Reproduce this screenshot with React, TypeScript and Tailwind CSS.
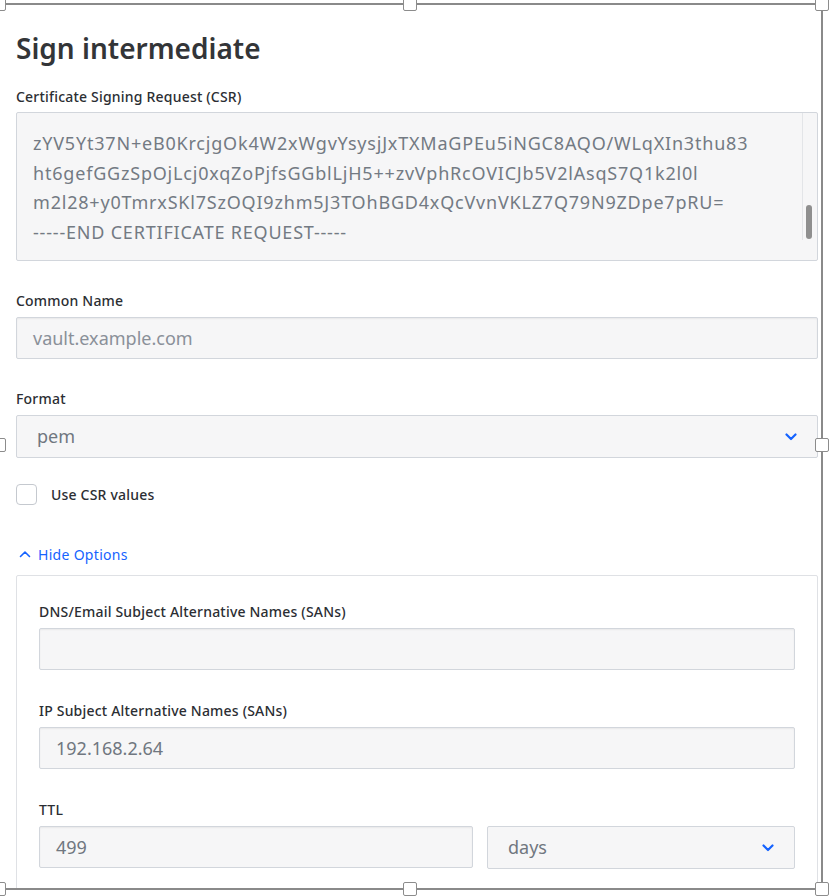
import React from "react";

const csrLines = [
  "zYV5Yt37N+eB0KrcjgOk4W2xWgvYsysjJxTXMaGPEu5iNGC8AQO/WLqXIn3thu83",
  "ht6gefGGzSpOjLcj0xqZoPjfsGGblLjH5++zvVphRcOVICJb5V2lAsqS7Q1k2l0l",
  "m2l28+y0TmrxSKl7SzOQI9zhm5J3TOhBGD4xQcVvnVKLZ7Q79N9ZDpe7pRU=",
  "-----END CERTIFICATE REQUEST-----",
];

function Chevron({ up = false, className = "" }: { up?: boolean; className?: string }) {
  return (
    <svg viewBox="0 0 12 8" className={className} fill="none">
      <path
        d={up ? "M1.5 6.5 6 2l4.5 4.5" : "M1.5 1.5 6 6l4.5-4.5"}
        stroke="currentColor"
        strokeWidth={up ? 1.6 : 2.2}
        strokeLinecap="round"
        strokeLinejoin="round"
      />
    </svg>
  );
}

function Label({ children, gap = "mb-[6px]" }: { children: React.ReactNode; gap?: string }) {
  return (
    <label className={`block h-5 leading-5 text-[14px] tracking-[0.2px] font-medium text-[#2b2e33] ${gap}`}>
      {children}
    </label>
  );
}

function Field({ value, placeholder }: { value?: string; placeholder?: string }) {
  return (
    <div className="h-[42px] flex items-center px-4 bg-[#f6f6f7] border border-[#d2d6dc] rounded-[2px] shadow-[inset_0_1px_2px_rgba(0,0,0,0.06)] text-[18px] text-[#707780]">
      {value ?? <span className="text-[#8a9099]">{placeholder}</span>}
    </div>
  );
}

function Select({ value }: { value: string }) {
  return (
    <div className="h-[43px] flex items-center justify-between pl-5 pr-5 bg-[#f6f6f7] border border-[#d2d6dc] rounded-[2px] text-[18px] text-[#707780]">
      <span>{value}</span>
      <Chevron className="w-3 h-2 text-[#1563ff]" />
    </div>
  );
}

function Handle({ pos }: { pos: string }) {
  return <div className={`absolute w-[14px] h-[14px] bg-white border border-[#8c8c8c] rounded-[2px] ${pos}`} />;
}

export default function App() {
  return (
    <div className="relative w-[834px] h-[896px] bg-white overflow-hidden" style={{ fontFamily: '"Noto Sans", "Open Sans", sans-serif' }}>
      <div className="h-[889px] overflow-hidden px-4 pt-[28px]">
        <h1 className="text-[28px] leading-10 font-semibold text-[#333538]">Sign intermediate</h1>

        <div className="mt-[19px]">
          <Label gap="mb-[5px]">Certificate Signing Request (CSR)</Label>
          <div className="relative h-[149px] bg-[#f6f6f7] border border-[#d2d6dc] rounded-[2px] overflow-hidden pl-4 pt-4 text-[18px] tracking-[0.8px] leading-[29.7px] text-[#737a83]">
            {csrLines.map((l) => (
              <div key={l} className="whitespace-nowrap">{l}</div>
            ))}
            <div className="absolute right-0 top-0 bottom-[20px] w-[15px] border-l border-[#e3e5e8]" />
            <div className="absolute right-[5px] top-[92px] w-[6px] h-[34px] rounded-full bg-[#8f8f8f]" />
          </div>
        </div>

        <div className="mt-[30px]">
          <Label>Common Name</Label>
          <Field placeholder="vault.example.com" />
        </div>

        <div className="mt-[30px]">
          <Label>Format</Label>
          <Select value="pem" />
        </div>

        <div className="mt-[26px] flex items-center gap-[14px]">
          <div className="w-[21px] h-[21px] rounded-[4px] border border-[#c5c9cf] bg-white" />
          <span className="text-[14px] tracking-[0.2px] font-medium text-[#2b2e33]">Use CSR values</span>
        </div>

        <button className="mt-[39px] flex items-center gap-[7px] pl-[3px] h-5 text-[14px] tracking-[0.3px] text-[#1563ff]">
          <Chevron up className="w-3 h-2" />
          <span>Hide Options</span>
        </button>

        <div className="mt-[11px] border border-[#dfe1e5] rounded-[2px] px-[22px] pt-[26px] pb-6">
          <div>
            <Label>DNS/Email Subject Alternative Names (SANs)</Label>
            <Field value="" />
          </div>
          <div className="mt-[31px]">
            <Label>IP Subject Alternative Names (SANs)</Label>
            <Field value="192.168.2.64" />
          </div>
          <div className="mt-[31px]">
            <Label>TTL</Label>
            <div className="flex gap-[14px]">
              <div className="flex-1">
                <Field value="499" />
              </div>
              <div className="w-[308px]">
                <Select value="days" />
              </div>
            </div>
          </div>
        </div>
      </div>

      {/* resize frame over the panel */}
      <div className="absolute left-0 top-[3px] w-[823px] h-[2px] bg-[#8a8a8a]" />
      <div className="absolute left-[821px] top-0 w-[2px] h-[890px] bg-[#8a8a8a]" />
      <div className="absolute left-0 top-[888px] w-[823px] h-[2px] bg-[#8a8a8a]" />
      <Handle pos="left-[-8px] top-[-3px]" />
      <Handle pos="left-[403px] top-[-3px]" />
      <Handle pos="left-[815px] top-[-3px]" />
      <Handle pos="left-[-8px] top-[438px]" />
      <Handle pos="left-[815px] top-[438px]" />
      <Handle pos="left-[-8px] top-[882px]" />
      <Handle pos="left-[403px] top-[882px]" />
      <Handle pos="left-[815px] top-[882px]" />
    </div>
  );
}
